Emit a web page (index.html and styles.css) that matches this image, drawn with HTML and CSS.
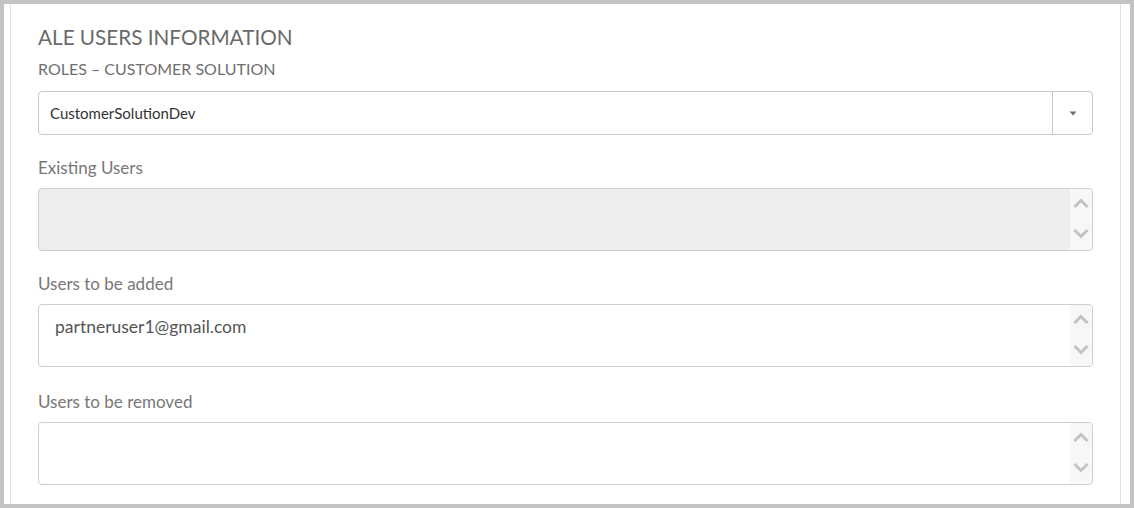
FILE: index.html
```html
<!DOCTYPE html>
<html lang="en">
<head>
  <meta charset="UTF-8" />
  <title>ALE Users Information</title>
  <link rel="stylesheet" href="styles.css">
</head>
<body>
  <div class="frame">
    <div class="panel">
      <h2>ALE USERS INFORMATION</h2>
      <div class="sub">ROLES – CUSTOMER SOLUTION</div>

      <div class="select">
        <span class="select-value">CustomerSolutionDev</span>
        <span class="select-btn">
          <svg width="8" height="5" viewBox="0 0 8 5"><path d="M0.5 0.5h7L4 4.5z" fill="#6f6f6f"/></svg>
        </span>
      </div>

      <label class="lbl">Existing Users</label>
      <div class="area disabled">
        <div class="area-text"></div>
        <div class="scroll">
          <svg width="16" height="12" viewBox="0 0 16 12"><path d="M1.5 10L8 3.5l6.5 6.5" fill="none" stroke="#c2c2c2" stroke-width="3"/></svg>
          <svg width="16" height="12" viewBox="0 0 16 12"><path d="M1.5 2L8 8.5 14.5 2" fill="none" stroke="#c2c2c2" stroke-width="3"/></svg>
        </div>
      </div>

      <label class="lbl">Users to be added</label>
      <div class="area">
        <div class="area-text">partneruser1@gmail.com</div>
        <div class="scroll">
          <svg width="16" height="12" viewBox="0 0 16 12"><path d="M1.5 10L8 3.5l6.5 6.5" fill="none" stroke="#c2c2c2" stroke-width="3"/></svg>
          <svg width="16" height="12" viewBox="0 0 16 12"><path d="M1.5 2L8 8.5 14.5 2" fill="none" stroke="#c2c2c2" stroke-width="3"/></svg>
        </div>
      </div>

      <label class="lbl last">Users to be removed</label>
      <div class="area">
        <div class="area-text"></div>
        <div class="scroll">
          <svg width="16" height="12" viewBox="0 0 16 12"><path d="M1.5 10L8 3.5l6.5 6.5" fill="none" stroke="#c2c2c2" stroke-width="3"/></svg>
          <svg width="16" height="12" viewBox="0 0 16 12"><path d="M1.5 2L8 8.5 14.5 2" fill="none" stroke="#c2c2c2" stroke-width="3"/></svg>
        </div>
      </div>
    </div>
  </div>
</body>
</html>
```

FILE: styles.css
```css
body {
  margin: 0;
  font-family: Lato, "Liberation Sans", sans-serif;
  background-color: #fff;
}

.frame {
  box-sizing: border-box;
  width: 1134px;
  height: 508px;
  border: 4px solid #c3c3c3;
  padding: 0 9px 0 6px;
  background-color: #fff;
  overflow: hidden;
}

.panel {
  height: 100%;
  border-left: 1px solid #e2e2e2;
  border-right: 1px solid #e2e2e2;
  padding: 0 27px;
}

h2 {
  margin: 0;
  padding-top: 19px;
  font-size: 20.7px;
  font-weight: normal;
  color: #6a6a6a;
  line-height: 28px;
}

.sub {
  margin-top: 8px;
  font-size: 16px;
  color: #6f6f6f;
  line-height: 20px;
}

.select {
  display: flex;
  height: 44px;
  box-sizing: border-box;
  margin-top: 12px;
  border: 1px solid #c8c8c8;
  border-radius: 4px;
}

.select-value {
  flex: 1;
  display: flex;
  align-items: center;
  padding-left: 11px;
  font-size: 15px;
  color: #333;
}

.select-btn {
  width: 39px;
  display: flex;
  align-items: center;
  justify-content: center;
  border-left: 1px solid #c8c8c8;
}

.lbl {
  display: block;
  margin-top: 23px;
  font-size: 17px;
  color: #777;
  line-height: 20px;
}

.lbl.last {
  margin-top: 25px;
}

.area {
  display: flex;
  height: 63px;
  box-sizing: border-box;
  margin-top: 10px;
  border: 1px solid #cfcfcf;
  border-radius: 4px;
  background-color: #fff;
}

.area.disabled {
  background-color: #eee;
}

.area-text {
  flex: 1;
  padding: 11px 0 0 16px;
  font-size: 17.5px;
  color: #555;
}

.scroll {
  width: 22px;
  background-color: #f7f7f7;
  border-radius: 0 4px 4px 0;
  display: flex;
  flex-direction: column;
  align-items: center;
  justify-content: space-between;
  padding: 8px 0 10px;
  box-sizing: border-box;
}
```
